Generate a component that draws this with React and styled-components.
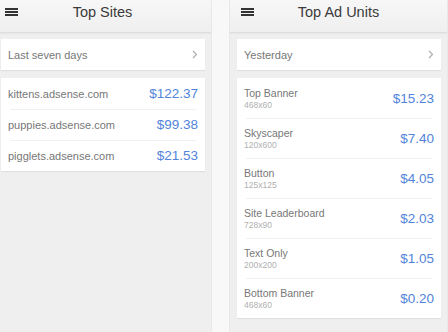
import React from 'react';
import styled, { createGlobalStyle } from 'styled-components';

const GlobalStyle = createGlobalStyle`
  html, body {
    margin: 0;
    padding: 0;
    background: #f8f8f8;
  }
  body {
    font-family: 'Liberation Sans', Arial, sans-serif;
    -webkit-font-smoothing: antialiased;
  }
`;

const Screen = styled.div`
  display: flex;
  gap: 17px;
  width: 448px;
  height: 332px;
  overflow: hidden;
  background: #f8f8f8;
`;

const Panel = styled.section`
  flex: 0 0 219px;
  display: flex;
  flex-direction: column;
  margin-left: ${props => props.$offset || 0}px;
  background: #efefef;
  border-left: 1px solid #e9e9e9;
  border-right: 1px solid #e9e9e9;
  box-sizing: border-box;
`;

const Header = styled.header`
  display: grid;
  grid-template-columns: 1fr auto 1fr;
  align-items: center;
  height: 24px;
  padding-bottom: 8px;
  background: linear-gradient(#f7f7f7, #efefef);
  border-bottom: 1px solid #dedede;
  box-shadow: 0 1px 1px rgba(0, 0, 0, 0.03);
`;

const MenuButton = styled.div`
  display: flex;
  flex-direction: column;
  gap: 1px;
  width: 13px;
  padding-left: 11px;

  span {
    display: block;
    height: 2px;
    background: #333;
  }
`;

const Title = styled.h1`
  margin: 0;
  font-size: 14.5px;
  font-weight: 400;
  color: #3a3a3a;
  white-space: nowrap;
`;

const Body = styled.div`
  display: flex;
  flex-direction: column;
  gap: 8px;
  padding: 6px 6px 0 7px;
`;

const Card = styled.div`
  background: #fff;
  box-shadow: 0 1px 1px rgba(0, 0, 0, 0.06);
`;

const FilterRow = styled.div`
  display: flex;
  align-items: center;
  justify-content: space-between;
  height: 31px;
  padding: 0 7px;
  font-size: 11px;
  color: #777;
`;

const Row = styled.div`
  display: flex;
  align-items: center;
  justify-content: space-between;
  height: ${props => (props.$tall ? 40 : 31)}px;
  padding: 0 7px;
  position: relative;

  & + &::before {
    content: '';
    position: absolute;
    top: 0;
    left: 9px;
    right: 9px;
    height: 1px;
    background: #f0f0f0;
  }
`;

const Label = styled.div`
  display: flex;
  flex-direction: column;
`;

const Name = styled.span`
  font-size: ${props => (props.$small ? 10.5 : 11)}px;
  color: #777;
  line-height: 14px;
`;

const Size = styled.span`
  font-size: 8.5px;
  color: #b0b0b0;
  line-height: 11px;
`;

const Price = styled.span`
  font-size: 13.5px;
  color: #5284da;
`;

const Chevron = () => (
  <svg width="6" height="9" viewBox="0 0 6 9">
    <polyline points="1,1 4.5,4.5 1,8" fill="none" stroke="#aaa" strokeWidth="1.1" />
  </svg>
);

const Menu = () => (
  <MenuButton>
    <span />
    <span />
    <span />
  </MenuButton>
);

const sites = [
  { name: 'kittens.adsense.com', value: '$122.37' },
  { name: 'puppies.adsense.com', value: '$99.38' },
  { name: 'pigglets.adsense.com', value: '$21.53' },
];

const units = [
  { name: 'Top Banner', size: '468x60', value: '$15.23' },
  { name: 'Skyscaper', size: '120x600', value: '$7.40' },
  { name: 'Button', size: '125x125', value: '$4.05' },
  { name: 'Site Leaderboard', size: '728x90', value: '$2.03' },
  { name: 'Text Only', size: '200x200', value: '$1.05' },
  { name: 'Bottom Banner', size: '468x60', value: '$0.20' },
];

const App = () => (
  <>
    <GlobalStyle />
    <Screen>
      <Panel $offset={-7}>
        <Header>
          <Menu />
          <Title>Top Sites</Title>
          <div />
        </Header>
        <Body>
          <Card>
            <FilterRow>
              Last seven days
              <Chevron />
            </FilterRow>
          </Card>
          <Card>
            {sites.map(site => (
              <Row key={site.name}>
                <Name>{site.name}</Name>
                <Price>{site.value}</Price>
              </Row>
            ))}
          </Card>
        </Body>
      </Panel>
      <Panel>
        <Header>
          <Menu />
          <Title>Top Ad Units</Title>
          <div />
        </Header>
        <Body>
          <Card>
            <FilterRow>
              Yesterday
              <Chevron />
            </FilterRow>
          </Card>
          <Card>
            {units.map(unit => (
              <Row $tall key={unit.name}>
                <Label>
                  <Name $small>{unit.name}</Name>
                  <Size>{unit.size}</Size>
                </Label>
                <Price>{unit.value}</Price>
              </Row>
            ))}
          </Card>
        </Body>
      </Panel>
    </Screen>
  </>
);

export default App;
